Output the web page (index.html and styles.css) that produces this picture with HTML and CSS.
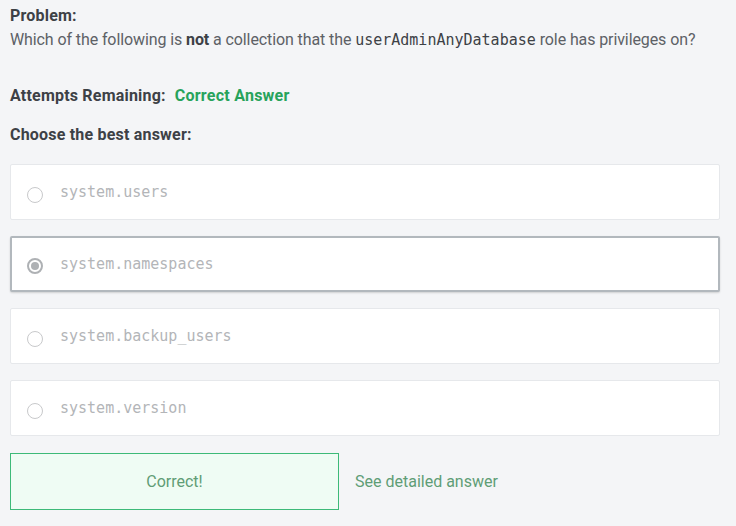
FILE: index.html
```html
<!DOCTYPE html>
<html>
<head>
<meta charset="utf-8">
<link rel="stylesheet" href="styles.css">
</head>
<body>
<div class="page">
  <div class="problem">
    <div class="label">Problem:</div>
    <div class="question">Which of the following is <b>not</b> a collection that the <code>userAdminAnyDatabase</code> role has privileges on?</div>
  </div>
  <div class="attempts"><span class="label">Attempts Remaining:</span><span class="correct-answer">Correct Answer</span></div>
  <div class="choose label">Choose the best answer:</div>
  <div class="options">
    <div class="option"><span class="radio"></span><code>system.users</code></div>
    <div class="option selected"><span class="radio"></span><code>system.namespaces</code></div>
    <div class="option"><span class="radio"></span><code>system.backup_users</code></div>
    <div class="option"><span class="radio"></span><code>system.version</code></div>
  </div>
  <div class="actions">
    <div class="result">Correct!</div>
    <a class="detail">See detailed answer</a>
  </div>
</div>
</body>
</html>
```
FILE: styles.css
```css
html, body {
  margin: 0;
  background: #f4f5f7;
}
body {
  font-family: Roboto, "Open Sans", sans-serif;
  font-size: 16px;
  color: #5d6166;
}
.page {
  padding: 4px 16px 0 10px;
}
.label {
  font-weight: bold;
  color: #3d4146;
  letter-spacing: 0.2px;
}
.problem {
  line-height: 24px;
}
.question {
  letter-spacing: -0.1px;
}
.question b {
  color: #3d4146;
}
code {
  font-family: "DejaVu Sans Mono", monospace;
  font-size: 15px;
  letter-spacing: 0;
  color: #3d4146;
}
.attempts {
  margin-top: 32px;
  line-height: 24px;
  display: flex;
  gap: 9px;
}
.correct-answer {
  color: #27a35b;
  font-weight: bold;
  letter-spacing: 0.25px;
}
.choose {
  margin-top: 15px;
  line-height: 24px;
}
.options {
  margin-top: 17px;
  display: flex;
  flex-direction: column;
  gap: 16px;
}
.option {
  height: 54px;
  background: #fff;
  border: 1px solid #e6e8eb;
  border-radius: 2px;
  display: flex;
  align-items: center;
  padding-left: 16px;
  gap: 17px;
}
.option code {
  color: #b3b5b8;
  font-size: 15px;
}
.option .radio {
  width: 14px;
  height: 14px;
  border: 1px solid #c8c9cb;
  border-radius: 50%;
  position: relative;
  top: 3px;
}
.option.selected {
  border: 2px solid #b2b8bd;
  box-shadow: 0 1px 2px rgba(0,0,0,0.15);
  height: 52px;
  padding-left: 15px;
}
.option.selected .radio {
  border: 2px solid #aeb1b4;
  width: 12px;
  height: 12px;
  top: 2px;
}
.option.selected .radio::after {
  content: "";
  position: absolute;
  left: 2px;
  top: 2px;
  width: 8px;
  height: 8px;
  border-radius: 50%;
  background: #aeb1b4;
}
.actions {
  margin-top: 17px;
  display: flex;
  align-items: center;
  gap: 16px;
}
.result {
  width: 327px;
  height: 55px;
  border: 1px solid #3dba78;
  background: #effcf4;
  color: #5f9d76;
  display: flex;
  align-items: center;
  justify-content: center;
}
.detail {
  color: #5f9d76;
}
```
